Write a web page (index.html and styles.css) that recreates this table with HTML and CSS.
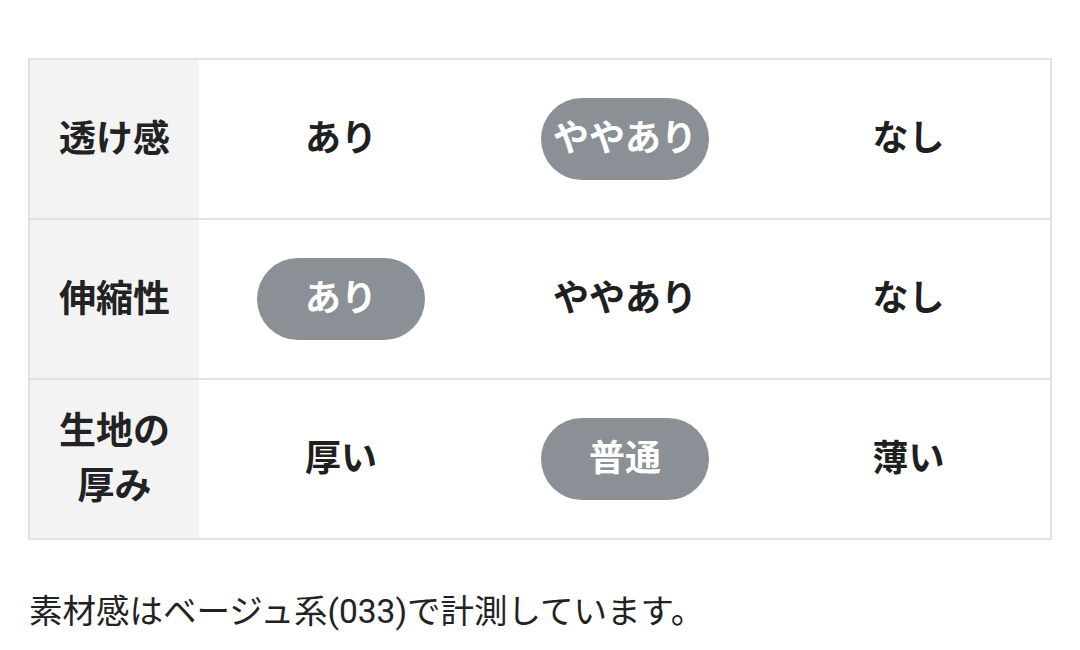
FILE: index.html
```html
<!DOCTYPE html>
<html lang="ja">
<head>
<meta charset="utf-8">
<link rel="stylesheet" href="styles.css">
</head>
<body>
<div class="wrap">
  <table class="spec">
    <tr>
      <th>透け感</th>
      <td><span class="opt">あり</span></td>
      <td><span class="opt on">ややあり</span></td>
      <td><span class="opt">なし</span></td>
    </tr>
    <tr>
      <th>伸縮性</th>
      <td><span class="opt on">あり</span></td>
      <td><span class="opt">ややあり</span></td>
      <td><span class="opt">なし</span></td>
    </tr>
    <tr>
      <th>生地の<br>厚み</th>
      <td><span class="opt">厚い</span></td>
      <td><span class="opt on">普通</span></td>
      <td><span class="opt">薄い</span></td>
    </tr>
  </table>
  <p class="note">素材感はベージュ系(033)で計測しています。</p>
</div>
</body>
</html>
```

FILE: styles.css
```css
html, body {
  margin: 0;
  padding: 0;
  background: #ffffff;
}
body {
  font-family: Roboto, "Noto Sans CJK JP", sans-serif;
  color: #222222;
}
.wrap {
  padding: 58px 0 0 28px;
}
.spec {
  border-collapse: collapse;
  width: 1024px;
  table-layout: fixed;
  border: 2px solid #dde3e9;
}
.spec th,
.spec td {
  border-top: 2px solid #dde3e9;
  border-bottom: 2px solid #dde3e9;
  height: 158px;
  padding: 0;
  text-align: center;
  vertical-align: middle;
  font-size: 36px;
  font-weight: 700;
  line-height: 55px;
}
.spec th {
  width: 169px;
  font-size: 37px;
  background: #f3f3f4;
  color: #222222;
}
.opt {
  display: inline-flex;
  align-items: center;
  justify-content: center;
  width: 168px;
  height: 82px;
  border-radius: 41px;
  color: #1f1f1f;
}
.opt.on {
  background: #8b9096;
  color: #ffffff;
}
.note {
  margin: 48px 0 0 1px;
  font-size: 33.5px;
  line-height: 48px;
  font-weight: 400;
  color: #222222;
}
```
